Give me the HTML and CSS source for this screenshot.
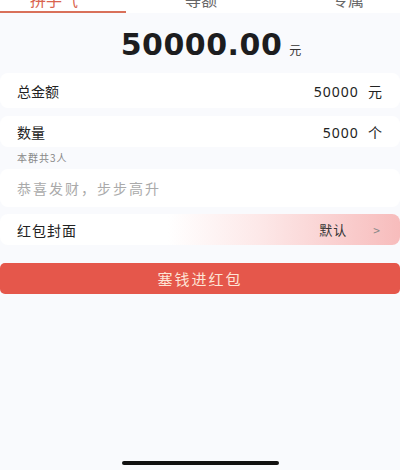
FILE: index.html
```html
<!DOCTYPE html>
<html lang="zh-CN">
<head>
    <meta charset="UTF-8">
    <meta name="viewport" content="width=device-width, initial-scale=1.0">
    <title>发红包</title>
    <link rel="stylesheet" href="styles.css">
</head>
<body>
    <div class="tabs">
        <div class="tab active">拼手气</div>
        <div class="tab tab-mid">等额</div>
        <div class="tab tab-last">专属</div>
    </div>

    <div class="total">
        <span class="total-num">50000.00</span>
        <span class="total-unit">元</span>
    </div>

    <div class="row">
        <span class="label">总金额</span>
        <span class="value">50000&nbsp;&nbsp;元</span>
    </div>

    <div class="row row-count">
        <span class="label">数量</span>
        <span class="value">5000&nbsp;&nbsp;个</span>
    </div>
    <div class="hint">本群共3人</div>

    <div class="row row-wish">
        <span class="placeholder">恭喜发财，步步高升</span>
    </div>

    <div class="row row-cover">
        <span class="label">红包封面</span>
        <span class="cover-right">
            <span class="cover-val">默认</span>
            <span class="arrow">&gt;</span>
        </span>
    </div>

    <button class="send">塞钱进红包</button>

    <div class="home-bar"></div>
</body>
</html>
```

FILE: styles.css
```css
* {
    box-sizing: border-box;
}
body {
    margin: 0;
    width: 400px;
    height: 470px;
    background: #f9fafd;
    font-family: "Noto Sans CJK SC", "Liberation Sans", sans-serif;
    color: #222;
    position: relative;
    overflow: hidden;
}
.tabs {
    display: flex;
    height: 13px;
    background: #fff;
    overflow: hidden;
}
.tab {
    text-align: center;
    font-size: 16px;
    line-height: 16px;
    margin-top: -9px;
    color: #666;
}
.tab.active {
    color: #d9634e;
    border-bottom: 2px solid #d9705a;
    flex: 0 0 126px;
    text-align: left;
    padding-left: 30px;
}
.tab-mid {
    flex: 0 0 150px;
}
.tab-last {
    flex: 1;
    padding-left: 20px;
}
.total {
    display: flex;
    justify-content: center;
    align-items: baseline;
    margin-top: 14px;
    height: 44px;
    padding-left: 22px;
}
.total-num {
    font-family: "DejaVu Sans", sans-serif;
    font-weight: bold;
    font-size: 30px;
    letter-spacing: 0.5px;
    color: #1d1d1f;
}
.total-unit {
    font-size: 12px;
    margin-left: 7px;
    color: #333;
}
.row {
    display: flex;
    justify-content: space-between;
    align-items: center;
    height: 35px;
    background: #fff;
    border-radius: 8px;
    padding: 0 17px;
    font-size: 14px;
    margin-top: 2px;
}
.value {
    font-family: "Noto Sans", "Noto Sans CJK SC", sans-serif;
    letter-spacing: 1px;
}
.row-count {
    margin-top: 8px;
    height: 31px;
}
.hint {
    font-size: 10px;
    color: #888;
    padding: 4px 0 0 17px;
    height: 22px;
    line-height: 14px;
    letter-spacing: 1px;
}
.row-wish {
    height: 38px;
    margin-top: 0;
}
.placeholder {
    color: #aaa;
    letter-spacing: 2px;
}
.row-cover {
    margin-top: 7px;
    height: 31px;
    background: linear-gradient(to right, #fff 0%, #fff 42%, #fde8e8 65%, #f7bcbc 100%);
    letter-spacing: 1px;
}
.cover-right {
    display: flex;
    align-items: center;
}
.cover-val {
    color: #333;
    font-size: 13px;
}
.arrow {
    color: #888;
    font-size: 12px;
    margin-left: 26px;
    margin-right: 2px;
}
.send {
    display: block;
    width: 400px;
    height: 31px;
    margin-top: 18px;
    border: none;
    border-radius: 5px;
    background: #e5574b;
    color: #fde4d6;
    font-family: "Noto Sans CJK SC", sans-serif;
    font-size: 15px;
    letter-spacing: 2px;
}
.home-bar {
    position: absolute;
    left: 122px;
    top: 461px;
    width: 157px;
    height: 4px;
    border-radius: 2px;
    background: #111;
}
```
